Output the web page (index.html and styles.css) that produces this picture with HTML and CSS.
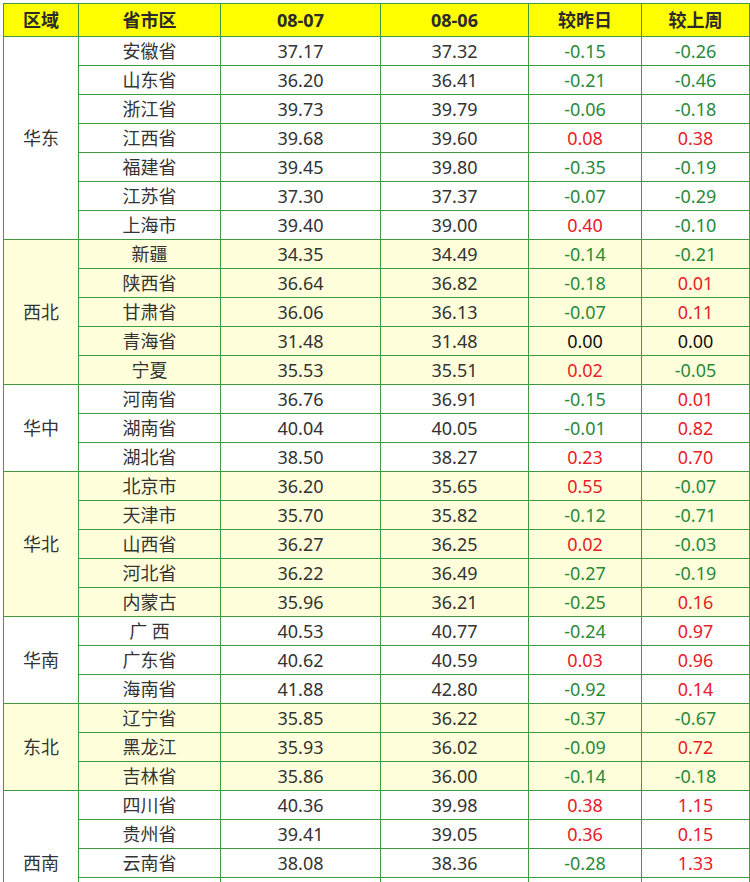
FILE: index.html
```html
<!DOCTYPE html>
<html lang="zh-CN">
<head>
<meta charset="utf-8">
<title>省市区价格</title>
<link rel="stylesheet" href="styles.css">
</head>
<body>
<table class="price-table">
  <colgroup>
    <col class="c-region"><col class="c-prov"><col class="c-d1"><col class="c-d2"><col class="c-day"><col class="c-week">
  </colgroup>
  <thead>
    <tr><th>区域</th><th>省市区</th><th>08-07</th><th>08-06</th><th>较昨日</th><th>较上周</th></tr>
  </thead>
  <tbody class="grp">
    <tr><td class="region" rowspan="7">华东</td><td>安徽省</td><td>37.17</td><td>37.32</td><td class="dn">-0.15</td><td class="dn">-0.26</td></tr>
    <tr><td>山东省</td><td>36.20</td><td>36.41</td><td class="dn">-0.21</td><td class="dn">-0.46</td></tr>
    <tr><td>浙江省</td><td>39.73</td><td>39.79</td><td class="dn">-0.06</td><td class="dn">-0.18</td></tr>
    <tr><td>江西省</td><td>39.68</td><td>39.60</td><td class="up">0.08</td><td class="up">0.38</td></tr>
    <tr><td>福建省</td><td>39.45</td><td>39.80</td><td class="dn">-0.35</td><td class="dn">-0.19</td></tr>
    <tr><td>江苏省</td><td>37.30</td><td>37.37</td><td class="dn">-0.07</td><td class="dn">-0.29</td></tr>
    <tr><td>上海市</td><td>39.40</td><td>39.00</td><td class="up">0.40</td><td class="dn">-0.10</td></tr>
  </tbody>
  <tbody class="grp alt">
    <tr><td class="region" rowspan="5">西北</td><td>新疆</td><td>34.35</td><td>34.49</td><td class="dn">-0.14</td><td class="dn">-0.21</td></tr>
    <tr><td>陕西省</td><td>36.64</td><td>36.82</td><td class="dn">-0.18</td><td class="up">0.01</td></tr>
    <tr><td>甘肃省</td><td>36.06</td><td>36.13</td><td class="dn">-0.07</td><td class="up">0.11</td></tr>
    <tr><td>青海省</td><td>31.48</td><td>31.48</td><td class="eq">0.00</td><td class="eq">0.00</td></tr>
    <tr><td>宁夏</td><td>35.53</td><td>35.51</td><td class="up">0.02</td><td class="dn">-0.05</td></tr>
  </tbody>
  <tbody class="grp">
    <tr><td class="region" rowspan="3">华中</td><td>河南省</td><td>36.76</td><td>36.91</td><td class="dn">-0.15</td><td class="up">0.01</td></tr>
    <tr><td>湖南省</td><td>40.04</td><td>40.05</td><td class="dn">-0.01</td><td class="up">0.82</td></tr>
    <tr><td>湖北省</td><td>38.50</td><td>38.27</td><td class="up">0.23</td><td class="up">0.70</td></tr>
  </tbody>
  <tbody class="grp alt">
    <tr><td class="region" rowspan="5">华北</td><td>北京市</td><td>36.20</td><td>35.65</td><td class="up">0.55</td><td class="dn">-0.07</td></tr>
    <tr><td>天津市</td><td>35.70</td><td>35.82</td><td class="dn">-0.12</td><td class="dn">-0.71</td></tr>
    <tr><td>山西省</td><td>36.27</td><td>36.25</td><td class="up">0.02</td><td class="dn">-0.03</td></tr>
    <tr><td>河北省</td><td>36.22</td><td>36.49</td><td class="dn">-0.27</td><td class="dn">-0.19</td></tr>
    <tr><td>内蒙古</td><td>35.96</td><td>36.21</td><td class="dn">-0.25</td><td class="up">0.16</td></tr>
  </tbody>
  <tbody class="grp">
    <tr><td class="region" rowspan="3">华南</td><td>广 西</td><td>40.53</td><td>40.77</td><td class="dn">-0.24</td><td class="up">0.97</td></tr>
    <tr><td>广东省</td><td>40.62</td><td>40.59</td><td class="up">0.03</td><td class="up">0.96</td></tr>
    <tr><td>海南省</td><td>41.88</td><td>42.80</td><td class="dn">-0.92</td><td class="up">0.14</td></tr>
  </tbody>
  <tbody class="grp alt">
    <tr><td class="region" rowspan="3">东北</td><td>辽宁省</td><td>35.85</td><td>36.22</td><td class="dn">-0.37</td><td class="dn">-0.67</td></tr>
    <tr><td>黑龙江</td><td>35.93</td><td>36.02</td><td class="dn">-0.09</td><td class="up">0.72</td></tr>
    <tr><td>吉林省</td><td>35.86</td><td>36.00</td><td class="dn">-0.14</td><td class="dn">-0.18</td></tr>
  </tbody>
  <tbody class="grp">
    <tr><td class="region" rowspan="5">西南</td><td>四川省</td><td>40.36</td><td>39.98</td><td class="up">0.38</td><td class="up">1.15</td></tr>
    <tr><td>贵州省</td><td>39.41</td><td>39.05</td><td class="up">0.36</td><td class="up">0.15</td></tr>
    <tr><td>云南省</td><td>38.08</td><td>38.36</td><td class="dn">-0.28</td><td class="up">1.33</td></tr>
    <tr><td></td><td></td><td></td><td></td><td></td></tr>
    <tr><td></td><td></td><td></td><td></td><td></td></tr>
  </tbody>
</table>
</body>
</html>
```

FILE: styles.css
```css
html, body {
  margin: 0;
  padding: 0;
  background: #ffffff;
}

body {
  padding: 3px 0 0 3px;
  font-family: "Noto Sans", "Noto Sans CJK SC", sans-serif;
  color: #333333;
}

.price-table {
  border-collapse: collapse;
  table-layout: fixed;
  width: 746px;
  font-size: 18px;
}

.c-region { width: 75px; }
.c-prov { width: 142px; }
.c-d1 { width: 160px; }
.c-d2 { width: 148px; }
.c-day { width: 113px; }
.c-week { width: 108px; }

.price-table th,
.price-table td {
  border: 1px solid #3f9b3f;
  padding: 0;
  text-align: center;
  vertical-align: middle;
  line-height: 20px;
  white-space: nowrap;
}

.price-table th {
  height: 32px;
  background: #ffff00;
  font-weight: bold;
  color: #2b2b2b;
}

.price-table td {
  height: 28px;
}

.grp.alt td {
  background: #ffffdb;
}

.price-table td.dn { color: #2a8a3a; }
.price-table td.up { color: #e8202a; }
.price-table td.eq { color: #111111; }
```
